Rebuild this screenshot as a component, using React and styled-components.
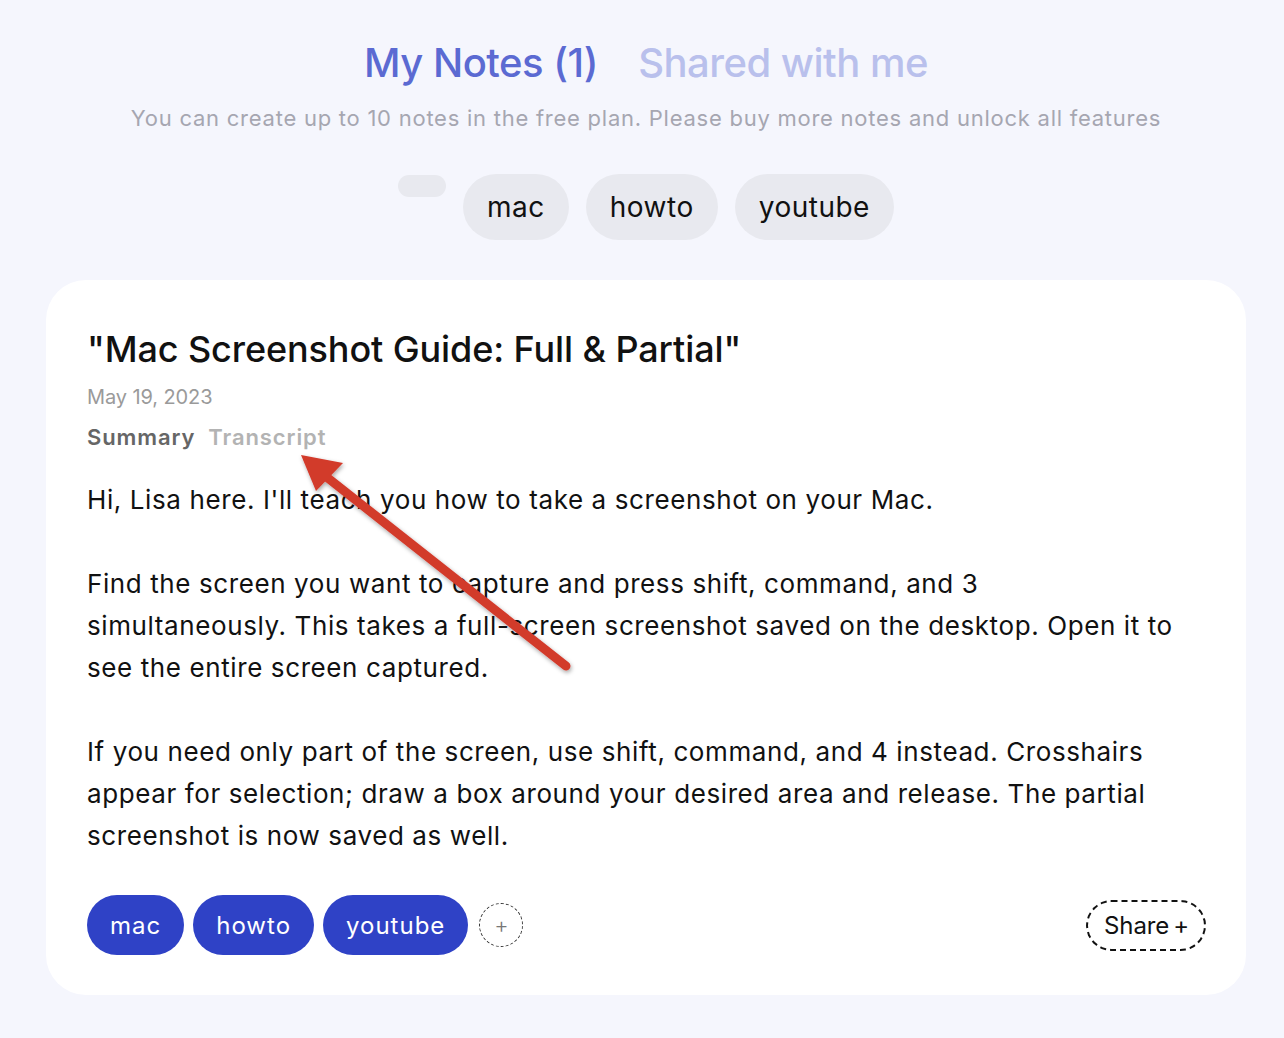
import React from "react";
import styled, { createGlobalStyle } from "styled-components";

const Global = createGlobalStyle`
  html, body { margin: 0; padding: 0; background: #f5f6fd; }
  body { font-family: Inter, "Noto Sans", sans-serif; }
`;

const Page = styled.div`
  position: relative;
  width: 1284px;
  min-height: 1038px;
  box-sizing: border-box;
  padding: 38px 38px 45px 46px;
  display: flex;
  flex-direction: column;
  align-items: center;
`;

const Tabs = styled.div`
  display: flex;
  gap: 40px;
  align-items: baseline;
`;

const Tab = styled.div`
  font-size: 40px;
  font-weight: 500;
  letter-spacing: -0.5px;
  line-height: 50px;
  color: ${(p) => (p.$active ? "#5b6ad2" : "#b9c0ec")};
`;

const Subtitle = styled.div`
  margin-top: 15px;
  font-size: 22px;
  line-height: 30px;
  color: #a6a6b1;
  letter-spacing: 0.75px;
`;

const FilterRow = styled.div`
  display: flex;
  gap: 17px;
  align-items: flex-start;
  margin-top: 41px;
`;

const FilterChip = styled.div`
  height: 66px;
  padding: 0 24px;
  border-radius: 33px;
  background: #e8e9ef;
  color: #111;
  font-size: 28px;
  letter-spacing: 0.5px;
  display: flex;
  align-items: center;
  box-sizing: border-box;
`;

const EmptyChip = styled.div`
  width: 48px;
  height: 22px;
  border-radius: 11px;
  background: #e8e9ef;
  margin-top: 1px;
`;

const Card = styled.div`
  align-self: stretch;
  margin-top: 40px;
  background: #fff;
  border-radius: 40px;
  padding: 46px 40px 40px 41px;
  display: flex;
  flex-direction: column;
`;

const Title = styled.h1`
  margin: 0;
  font-size: 36px;
  font-weight: 500;
  letter-spacing: -0.1px;
  line-height: 46px;
  color: #111;
`;

const DateLine = styled.div`
  margin-top: 12px;
  font-size: 20px;
  line-height: 26px;
  color: #9a9a9a;
  letter-spacing: -0.1px;
`;

const ViewTabs = styled.div`
  display: flex;
  gap: 13px;
  margin-top: 13px;
`;

const ViewTab = styled.div`
  font-size: 22px;
  font-weight: 600;
  line-height: 28px;
  letter-spacing: 0.9px;
  color: ${(p) => (p.$active ? "#666" : "#b3b3b3")};
`;

const Body = styled.div`
  margin-top: 28px;
  font-size: 26px;
  line-height: 42px;
  color: #111;
  white-space: pre-line;
  letter-spacing: 0.6px;
`;

const Footer = styled.div`
  margin-top: 38px;
  display: flex;
  align-items: center;
  justify-content: space-between;
`;

const TagList = styled.div`
  display: flex;
  align-items: center;
  gap: 9px;
`;

const Tag = styled.div`
  height: 60px;
  padding: 0 23px;
  border-radius: 30px;
  background: #2f42c6;
  color: #fff;
  font-size: 24px;
  letter-spacing: 1px;
  display: flex;
  align-items: center;
  box-sizing: border-box;
`;

const AddTag = styled.div`
  width: 44px;
  height: 44px;
  margin-left: 2px;
  border: 1.5px dashed #333;
  border-radius: 50%;
  box-sizing: border-box;
  display: flex;
  align-items: center;
  justify-content: center;
  color: #777;
  font-size: 22px;
  font-weight: 300;
`;

const ShareButton = styled.div`
  height: 51px;
  padding: 0 15px 0 16px;
  border: 2px dashed #111;
  border-radius: 26px;
  box-sizing: border-box;
  display: flex;
  align-items: center;
  gap: 4px;
  font-size: 24px;
  color: #111;
  letter-spacing: -0.1px;
`;

const Arrow = styled.svg`
  position: absolute;
  left: 0;
  top: 0;
  pointer-events: none;
`;

const body = `Hi, Lisa here. I'll teach you how to take a screenshot on your Mac.

Find the screen you want to capture and press shift, command, and 3
simultaneously. This takes a full-screen screenshot saved on the desktop. Open it to
see the entire screen captured.

If you need only part of the screen, use shift, command, and 4 instead. Crosshairs
appear for selection; draw a box around your desired area and release. The partial
screenshot is now saved as well.`;

export default function App() {
  return (
    <Page>
      <Global />
      <Tabs>
        <Tab $active>My Notes (1)</Tab>
        <Tab>Shared with me</Tab>
      </Tabs>
      <Subtitle>
        You can create up to 10 notes in the free plan. Please buy more notes and unlock all features
      </Subtitle>
      <FilterRow>
        <EmptyChip />
        <FilterChip>mac</FilterChip>
        <FilterChip>howto</FilterChip>
        <FilterChip>youtube</FilterChip>
      </FilterRow>
      <Card>
        <Title>"Mac Screenshot Guide: Full &amp; Partial"</Title>
        <DateLine>May 19, 2023</DateLine>
        <ViewTabs>
          <ViewTab $active>Summary</ViewTab>
          <ViewTab>Transcript</ViewTab>
        </ViewTabs>
        <Body>{body}</Body>
        <Footer>
          <TagList>
            <Tag>mac</Tag>
            <Tag>howto</Tag>
            <Tag>youtube</Tag>
            <AddTag>+</AddTag>
          </TagList>
          <ShareButton>
            Share<span>+</span>
          </ShareButton>
        </Footer>
      </Card>
      <Arrow width="1284" height="1038" viewBox="0 0 1284 1038">
        <defs>
          <filter id="sh" x="-20%" y="-20%" width="140%" height="140%">
            <feDropShadow dx="1" dy="2" stdDeviation="2" floodColor="#000" floodOpacity="0.35" />
          </filter>
        </defs>
        <g filter="url(#sh)">
          <line x1="566" y1="666" x2="324" y2="475" stroke="#d23a2c" strokeWidth="9" strokeLinecap="round" />
          <polygon points="301,455 343,463 316,491" fill="#d23a2c" />
        </g>
      </Arrow>
    </Page>
  );
}
